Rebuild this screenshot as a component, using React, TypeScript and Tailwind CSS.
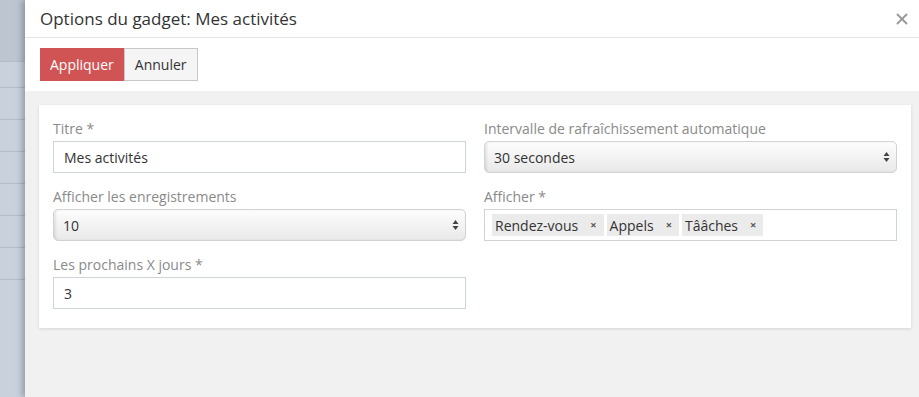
import { X } from 'lucide-react';

const font = { fontFamily: '"Open Sans", "Liberation Sans", sans-serif' };

const SelectArrows = () => (
  <svg width="7" height="12" viewBox="0 0 7 12" className="text-[#444]">
    <path d="M3.5 1 L6.5 5 L0.5 5 Z" fill="currentColor" />
    <path d="M3.5 11 L6.5 7 L0.5 7 Z" fill="currentColor" />
  </svg>
);

const Label = ({ children }: { children: string }) => (
  <label className="block h-[20px] mb-[2px] text-[14px] leading-[20px] text-[#8a8a8a]">{children}</label>
);

const TextInput = ({ value }: { value: string }) => (
  <div className="h-[32px] border border-[#cfd4d4] bg-white px-[10px] flex items-center text-[14px] text-[#333]">
    {value}
  </div>
);

const FakeSelect = ({ value }: { value: string }) => (
  <div className="h-[32px] rounded-[5px] border border-[#d2d2d2] bg-gradient-to-b from-[#fdfdfd] to-[#e9e9e9] shadow-[inset_2px_0_2px_rgba(0,0,0,0.08)] pl-[9px] pr-[6px] flex items-center justify-between text-[14px] text-[#333]">
    <span>{value}</span>
    <SelectArrows />
  </div>
);

const Tag = ({ label }: { label: string }) => (
  <span className="h-[22px] flex items-center bg-[#ebebeb] pl-[3px] pr-[7px] text-[14px] text-[#333]">
    {label}
    <span className="ml-[12px] text-[11px] font-bold text-[#555]">×</span>
  </span>
);

const sideRows = [26, 32, 32, 32, 32, 32, 32];

export default function App() {
  return (
    <div className="flex w-[919px] h-[397px] overflow-hidden bg-[#f1f1f1]" style={font}>
      {/* background page strip */}
      <div className="w-[25px] shrink-0 flex flex-col bg-[#c9d1dc]">
        <div className="h-[62px] border-b border-[#b3bcc7] bg-[#bcc5d0]" />
        {sideRows.map((h, i) => (
          <div key={i} style={{ height: h }} className="border-b border-[#b3bcc7]" />
        ))}
      </div>

      {/* modal */}
      <div className="flex-1 flex flex-col relative shadow-[-3px_0_6px_rgba(0,0,0,0.25)] bg-[#f1f1f1]">
        <div className="h-[38px] shrink-0 bg-white border-b border-[#e5e5e5] flex items-center justify-between pl-[15px] pr-[8px]">
          <h1 className="text-[17px] text-[#333] leading-none">Options du gadget: Mes activités</h1>
          <X size={18} strokeWidth={2.5} className="text-[#9a9a9a]" />
        </div>

        <div className="h-[53px] shrink-0 bg-white flex items-center pl-[15px]">
          <button className="h-[33px] px-[10px] bg-[#d05454] text-white text-[14px]">Appliquer</button>
          <button className="h-[33px] px-[10px] bg-[#f5f5f5] border border-[#c8c8c8] text-[#333] text-[14px]">Annuler</button>
        </div>

        <div className="flex-1 pt-[14px] pl-[14px] pr-[8px]">
          <div className="bg-white shadow-[0_1px_3px_rgba(0,0,0,0.12)] px-[14px] pt-[14px] pb-[19px]">
            <div className="grid grid-cols-2 gap-x-[18px] gap-y-[14px]">
              <div>
                <Label>Titre *</Label>
                <TextInput value="Mes activités" />
              </div>
              <div>
                <Label>Intervalle de rafraîchissement automatique</Label>
                <FakeSelect value="30 secondes" />
              </div>
              <div>
                <Label>Afficher les enregistrements</Label>
                <FakeSelect value="10" />
              </div>
              <div>
                <Label>Afficher *</Label>
                <div className="h-[32px] border border-[#cfd4d4] bg-white px-[7px] flex items-center gap-[3px]">
                  <Tag label="Rendez-vous" />
                  <Tag label="Appels" />
                  <Tag label="Tââches" />
                </div>
              </div>
              <div>
                <Label>Les prochains X jours *</Label>
                <TextInput value="3" />
              </div>
            </div>
          </div>
        </div>
      </div>
    </div>
  );
}
